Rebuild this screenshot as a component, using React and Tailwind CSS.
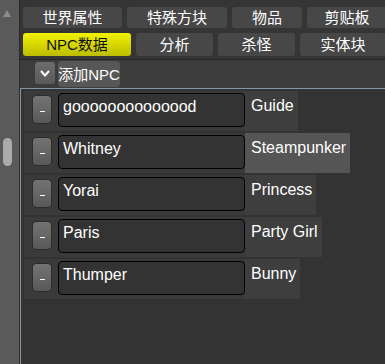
import React from "react";

const font = { fontFamily: '"Liberation Sans", "Noto Sans CJK SC", sans-serif' };

function Tab({ children, w, active, h }) {
  return (
    <div
      className={`flex shrink-0 items-center justify-center rounded-[3px] text-[15px] leading-none ${h} ${w} ${
        active
          ? "bg-gradient-to-b from-[#f2f200] to-[#bcbc00] text-[#111]"
          : "bg-[#474747] text-white"
      }`}
    >
      {children}
    </div>
  );
}

function Row({ name, role, hl }) {
  return (
    <div className="flex h-[40px] w-fit bg-[#3a3a3a]">
      <div className="ml-[8px] mt-[4px] flex h-[29px] w-[20px] items-end justify-center rounded-[4px] border border-[#2c2c2c] bg-gradient-to-b from-[#727272] via-[#676767] to-[#575757] pb-[11px]">
        <div className="h-[1px] w-[5px] bg-white" />
      </div>
      <div className="ml-[6px] mt-[2px] h-[34px] w-[187px] rounded-[4px] border border-black bg-[#333] pl-[4px] pt-[3px] text-[16px] leading-[20px] text-white">
        {name}
      </div>
      <div
        className={`h-full pl-[6px] pr-[4px] pt-[5px] text-[16px] leading-[20px] text-white ${
          hl ? "bg-[#555555]" : "bg-[#3e3e3e]"
        }`}
      >
        {role}
      </div>
    </div>
  );
}

export default function App() {
  const rows = [
    ["goooooooooooood", "Guide"],
    ["Whitney", "Steampunker", true],
    ["Yorai", "Princess"],
    ["Paris", "Party Girl"],
    ["Thumper", "Bunny"],
  ];
  return (
    <div className="flex h-[364px] w-[385px] overflow-hidden bg-[#333]" style={font}>
      <div className="flex w-[20px] shrink-0 flex-col border-r border-[#2a2a2a] bg-[#5a5a5a] pl-[3px]">
        <svg width="8" height="7" className="mt-[10px]" viewBox="0 0 8 7">
          <polygon points="4,0 8,7 0,7" fill="#8c8c8c" />
        </svg>
        <div className="mt-[121px] h-[28px] w-[9px] rounded-full bg-[#ababab]" />
      </div>
      <div className="flex min-w-0 flex-1 flex-col">
        <div className="flex flex-col gap-[5px] bg-[#353535] pb-[3px] pl-[3px] pt-[7px]">
          <div className="flex gap-[5px]">
            <Tab w="w-[99px]" h="h-[21px]">世界属性</Tab>
            <Tab w="w-[100px]" h="h-[21px]">特殊方块</Tab>
            <Tab w="w-[70px]" h="h-[21px]">物品</Tab>
            <Tab w="w-[80px]" h="h-[21px]">剪贴板</Tab>
          </div>
          <div className="flex gap-[5px]">
            <Tab w="w-[108px]" h="h-[23px]" active>NPC数据</Tab>
            <Tab w="w-[77px]" h="h-[23px]">分析</Tab>
            <Tab w="w-[77px]" h="h-[23px]">杀怪</Tab>
            <Tab w="w-[86px]" h="h-[23px]">实体块</Tab>
          </div>
        </div>
        <div className="flex h-[29px] items-start border-t border-[#262626] bg-[#3c3c3c] pl-[15px]">
          <div className="mt-[2px] flex h-[22px] w-[20px] items-center justify-center rounded-[3px] bg-gradient-to-b from-[#6c6c6c] to-[#5a5a5a]">
            <svg width="10" height="7" viewBox="0 0 10 7">
              <polyline points="1,1 5,5.5 9,1" fill="none" stroke="#fff" strokeWidth="2" />
            </svg>
          </div>
          <div className="ml-[3px] mt-[1px] flex h-[26px] w-[62px] items-center justify-center rounded-[4px] bg-[#575757] text-[15px] leading-none text-white">
            添加NPC
          </div>
        </div>
        <div className="flex flex-1 flex-col gap-[2px] border-l border-t border-[#8795a3] bg-[#333] pl-[3px] pt-[2px]">
          {rows.map(([n, r, hl]) => (
            <Row key={n} name={n} role={r} hl={hl} />
          ))}
        </div>
      </div>
    </div>
  );
}
